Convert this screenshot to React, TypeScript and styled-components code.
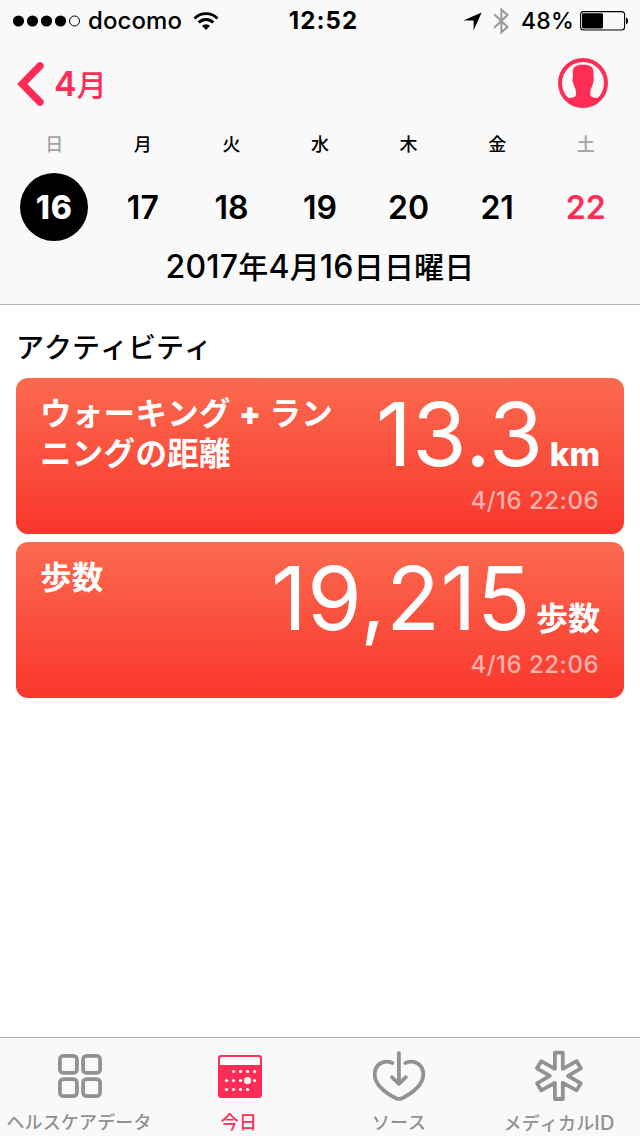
import React from 'react';
import styled, { createGlobalStyle } from 'styled-components';

const PINK = '#ff2d55';
const GRAY = '#929292';

const GlobalStyle = createGlobalStyle`
  * { box-sizing: border-box; }
  body {
    margin: 0;
    background: #fff;
    color: #000;
    font-family: Inter, "Noto Sans CJK JP", sans-serif;
    font-kerning: none;
  }
`;

const Screen = styled.div`
  width: 640px;
  height: 1136px;
  display: flex;
  flex-direction: column;
  overflow: hidden;
  background: #fff;
  white-space: nowrap;
`;

const Header = styled.header`
  height: 305px;
  background: #f9f9f9;
  border-bottom: 1px solid #b2b2b2;
`;

const StatusBar = styled.div`
  height: 40px;
  display: grid;
  grid-template-columns: 1fr auto 1fr;
  align-items: center;
  padding: 1px 11px 0 13px;
  font-size: 24px;
  line-height: 40px;
  font-weight: 500;
`;

const StatusGroup = styled.div<{ $end?: boolean }>`
  display: flex;
  align-items: center;
  justify-content: ${(p) => (p.$end ? 'flex-end' : 'flex-start')};
`;

const Carrier = styled.span`
  margin: 0 11px 0 7px;
  letter-spacing: 0.1px;
`;

const Clock = styled.span`
  padding-left: 5px;
  font-weight: 700;
  letter-spacing: 1.1px;
`;

const Percent = styled.span`
  margin: 0 6px 0 11px;
  font-size: 23px;
  letter-spacing: 0.2px;
`;

const NavBar = styled.div`
  height: 88px;
  display: flex;
  align-items: center;
  justify-content: space-between;
  padding: 0 32px 2px 17px;
`;

const BackButton = styled.button`
  display: flex;
  align-items: center;
  gap: 9px;
  padding: 2px 0 0;
  border: 0;
  background: none;
  color: ${PINK};
  font: 560 34px/44px Inter, "Noto Sans CJK JP", sans-serif;
`;

const Jp = styled.span<{ $size: number }>`
  font-size: ${(p) => p.$size}px;
`;

const Week = styled.div`
  display: grid;
  grid-template-columns: repeat(7, 1fr);
  padding: 0 10px;
`;

const Day = styled.div`
  display: flex;
  flex-direction: column;
  align-items: center;
  gap: 11px;
`;

const Weekday = styled.span<{ $muted: boolean }>`
  font-size: 18px;
  line-height: 34px;
  font-weight: 500;
  color: ${(p) => (p.$muted ? '#a3a3a3' : '#000')};
`;

const DayNumber = styled.span<{ $selected: boolean; $accent: boolean }>`
  width: 68px;
  height: 68px;
  padding-top: 2px;
  border-radius: 50%;
  text-align: center;
  font-size: 32px;
  line-height: 66px;
  letter-spacing: ${(p) => (p.$selected ? '0.8px' : '0')};
  font-weight: ${(p) => (p.$selected ? 800 : 560)};
  background: ${(p) => (p.$selected ? '#000' : 'transparent')};
  color: ${(p) => (p.$selected ? '#fff' : p.$accent ? PINK : '#000')};
`;

const FullDate = styled.div`
  margin-top: 6px;
  text-align: center;
  font-size: 32px;
  line-height: 40px;
  font-weight: 500;
  letter-spacing: 0.2px;
`;

const Main = styled.main`
  flex: 1;
  padding: 23px 16px 0;
`;

const SectionTitle = styled.h2`
  margin: 0 0 10px;
  font-size: 28px;
  line-height: 40px;
  font-weight: 500;
`;

const Card = styled.section`
  height: 156px;
  margin-bottom: 8px;
  padding: 16px 24px 0 24px;
  border-radius: 12px;
  display: flex;
  justify-content: space-between;
  color: #fff;
  background: linear-gradient(#fb6a4f, #f9372c);
`;

const CardLabel = styled.div`
  font-size: 31.5px;
  line-height: 40px;
  font-weight: 600;
  letter-spacing: 0.3px;
`;

const Plus = styled.span`
  font-weight: 900;
`;

const Reading = styled.div`
  display: flex;
  flex-direction: column;
  align-items: flex-end;
`;

const Amount = styled.div`
  display: flex;
  align-items: baseline;
  height: 80px;
  line-height: 80px;
  font-size: 88px;
  font-weight: 400;
  letter-spacing: 0.6px;
  font-kerning: normal;
`;

const Unit = styled.span<{ $latin?: boolean }>`
  margin-left: ${(p) => (p.$latin ? 6 : 5)}px;
  font-size: ${(p) => (p.$latin ? 33 : 32)}px;
  line-height: 32px;
  font-weight: ${(p) => (p.$latin ? 800 : 600)};
  letter-spacing: 0;
`;

const Stamp = styled.div`
  margin-top: 11px;
  font-size: 24px;
  line-height: 32px;
  font-weight: 500;
  letter-spacing: 0.5px;
  margin-right: 1px;
  color: rgba(255, 255, 255, 0.6);
`;

const TabBar = styled.nav`
  height: 99px;
  display: grid;
  grid-template-columns: repeat(4, 1fr);
  background: #f9f9f9;
  border-top: 1px solid #b2b2b2;
`;

const Tab = styled.div<{ $active?: boolean }>`
  display: flex;
  flex-direction: column;
  align-items: center;
  padding-top: 10px;
  color: ${(p) => (p.$active ? PINK : GRAY)};
`;

const TabLabel = styled.span`
  margin-top: 5px;
  padding-right: 2px;
  font-size: 18px;
  line-height: 28px;
  font-weight: 500;
  letter-spacing: 0.15px;
`;

const TabLatin = styled.span`
  font-size: 20px;
`;

const SignalDots = () => (
  <svg width="68" height="12" viewBox="0 0 68 12">
    {[5.5, 19.5, 33.5, 47.5].map((x) => (
      <circle key={x} cx={x} cy="6" r="5.6" />
    ))}
    <circle cx="61.5" cy="6" r="5" fill="none" stroke="#000" strokeWidth="1" />
  </svg>
);

const WifiIcon = () => (
  <svg width="26" height="20" viewBox="0 0 26 20" fill="none" stroke="#000" strokeWidth="2.9">
    <path d="M1.5 7.4a16.2 16.2 0 0 1 23 0" />
    <path d="M5.7 11.6a10.3 10.3 0 0 1 14.6 0" />
    <path d="M13 19l-4-4.2a5.8 5.8 0 0 1 8 0z" fill="#000" stroke="none" />
  </svg>
);

const LocationIcon = () => (
  <svg width="19" height="19" viewBox="0 0 19 19">
    <path d="M18.6.4L10.6 18.4V8.4H.4z" />
  </svg>
);

const BluetoothGlyph = styled.svg`
  margin-left: 10px;
`;

const BluetoothIcon = () => (
  <BluetoothGlyph width="18" height="28" viewBox="0 0 18 28" fill="none" stroke="#9a9a9a" strokeWidth="2.1">
    <path d="M2.2 7.2L15.5 20 9.400 25.400V2.600L15.500 8 2.200 20.800" />
  </BluetoothGlyph>
);

const BatteryIcon = () => (
  <svg width="49" height="20" viewBox="0 0 49 20">
    <rect x=".6" y=".6" width="44" height="18.4" rx="3" fill="none" stroke="#000" strokeWidth="1.1" />
    <rect x="2" y="2.2" width="21" height="15.2" rx="1.4" />
    <path d="M46 6.4c2.8.6 2.8 6.2 0 6.8z" />
  </svg>
);

const BackIcon = () => (
  <svg width="28" height="46" viewBox="0 0 28 46" fill="none" stroke={PINK} strokeWidth="7.4" strokeLinecap="round" strokeLinejoin="miter">
    <path d="M23 4.8L5.3 23 23 41.2" />
  </svg>
);

const ProfileIcon = () => (
  <svg width="50" height="50" viewBox="0 0 50 50" fill={PINK}>
    <circle cx="25" cy="25" r="23" fill="none" stroke={PINK} strokeWidth="4" />
    <path d="M25 6.7C31 6.7 35.300 8.500 35.500 13V20C36.300 21 35.600 24 34.800 25.500C34.400 28 33.600 29.500 32.800 31C32.300 33 32.200 35 32.400 37C32.600 39 35 39.600 37.300 39.800L41.500 40.500L38 45L25 49.500L12 45L8.500 40.500L12.700 39.800C15 39.600 17.700 39 17.900 37C18.100 35 18 33 17.500 31C16.700 29.500 15.900 28 15.500 25.500C14.400 24 14 21 14.800 20V13C15 8.500 19 6.700 25 6.700z" />
  </svg>
);

const GridIcon = () => (
  <svg width="54" height="56" viewBox="0 0 54 56" fill="none" stroke={GRAY} strokeWidth="3.8">
    {[[6.9, 7.9], [30.1, 7.9], [6.9, 31.1], [30.1, 31.1]].map(([x, y]) => (
      <rect key={`${x}-${y}`} x={x} y={y} width="17" height="17" rx="3.5" />
    ))}
  </svg>
);

const dots = [
  [15.5, 16.5], [22.5, 16.5], [29.5, 16.5], [36.5, 16.5],
  [8.5, 25.5], [15.5, 25.5], [22.5, 25.5], [36.5, 25.5],
  [8.5, 34.5], [15.5, 34.5], [22.5, 34.5], [29.5, 34.5],
];

const CalendarIcon = () => (
  <svg width="44" height="56" viewBox="0 -7 44 56">
    <rect width="44" height="43" rx="3" fill={PINK} />
    <path d="M3.5 2h37a1.5 1.5 0 0 1 1.5 1.5V10H2V3.5A1.5 1.5 0 0 1 3.5 2z" fill="#fff" />
    {dots.map(([x, y]) => (
      <circle key={`${x}-${y}`} cx={x} cy={y} r="1.6" fill="#fff" />
    ))}
    <circle cx="29.5" cy="25.5" r="3.6" fill="#fff" />
  </svg>
);

const SourcesIcon = () => (
  <svg width="54" height="56" viewBox="0 0 54 56" fill="none" stroke={GRAY} strokeWidth="3.8" strokeLinecap="round" strokeLinejoin="round">
    <path d="M19.4 15C10 11 1.7 17 1.7 26.5C1.7 36 11.5 44.8 23 50.2Q26 51.6 29 50.2C40.5 44.8 50.3 36 50.3 26.5C50.3 17 42 11 32.4 15" />
    <path d="M25.9 5.2V35.6M18.9 29.2L25.9 35.8 32.9 29.2" />
  </svg>
);

const MedicalIcon = () => (
  <svg width="54" height="56" viewBox="0 0 54 56" fill="none" stroke={GRAY} strokeWidth="3.8" strokeLinejoin="round">
    <path d="M21.9 4.6H29.8V20.8L43.6 13.2 47.8 20.3 35 27.8 47.8 35.3 43.6 42.4 29.8 34.8V51H21.9V34.8L8.2 42.4 4 35.3 16.8 27.8 4 20.3 8.2 13.2 21.9 20.8Z" />
  </svg>
);

const days = [
  { name: '日', date: 16 },
  { name: '月', date: 17 },
  { name: '火', date: 18 },
  { name: '水', date: 19 },
  { name: '木', date: 20 },
  { name: '金', date: 21 },
  { name: '土', date: 22 },
];

const metrics = [
  {
    label: <>ウォーキング <Plus>+</Plus> ラン<br />ニングの距離</>,
    value: '13.3',
    unit: 'km',
    latin: true,
  },
  { label: '歩数', value: '19,215', unit: '歩数' },
];

const tabs = [
  { id: 'data', label: 'ヘルスケアデータ', Icon: GridIcon },
  { id: 'today', label: '今日', Icon: CalendarIcon, active: true },
  { id: 'sources', label: 'ソース', Icon: SourcesIcon },
  { id: 'medical', label: <>メディカル<TabLatin>ID</TabLatin></>, Icon: MedicalIcon },
];

export default function App() {
  return (
    <Screen>
      <GlobalStyle />
      <Header>
        <StatusBar>
          <StatusGroup>
            <SignalDots />
            <Carrier>docomo</Carrier>
            <WifiIcon />
          </StatusGroup>
          <Clock>12:52</Clock>
          <StatusGroup $end>
            <LocationIcon />
            <BluetoothIcon />
            <Percent>48%</Percent>
            <BatteryIcon />
          </StatusGroup>
        </StatusBar>
        <NavBar>
          <BackButton>
            <BackIcon />
            <span>4<Jp $size={30}>月</Jp></span>
          </BackButton>
          <ProfileIcon />
        </NavBar>
        <Week>
          {days.map((d, i) => (
            <Day key={d.date}>
              <Weekday $muted={i === 0 || i === 6}>{d.name}</Weekday>
              <DayNumber $selected={i === 0} $accent={i === 6}>{d.date}</DayNumber>
            </Day>
          ))}
        </Week>
        <FullDate>
          2017<Jp $size={30}>年</Jp>4<Jp $size={30}>月</Jp>16<Jp $size={30}>日日曜日</Jp>
        </FullDate>
      </Header>
      <Main>
        <SectionTitle>アクティビティ</SectionTitle>
        {metrics.map((m) => (
          <Card key={m.unit}>
            <CardLabel>{m.label}</CardLabel>
            <Reading>
              <Amount>
                {m.value}
                <Unit $latin={m.latin}>{m.unit}</Unit>
              </Amount>
              <Stamp>4/16 22:06</Stamp>
            </Reading>
          </Card>
        ))}
      </Main>
      <TabBar>
        {tabs.map(({ id, label, Icon, active }) => (
          <Tab key={id} $active={active}>
            <Icon />
            <TabLabel>{label}</TabLabel>
          </Tab>
        ))}
      </TabBar>
    </Screen>
  );
}
